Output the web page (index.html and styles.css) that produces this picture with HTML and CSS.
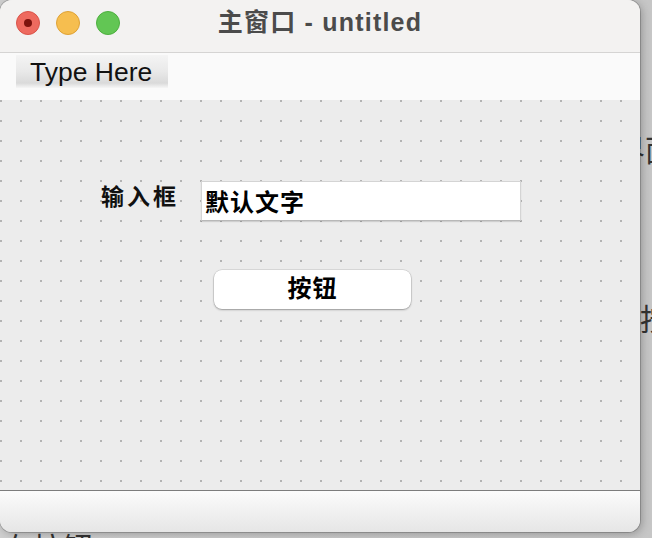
FILE: index.html
```html
<!DOCTYPE html>
<html lang="zh">
<head>
<meta charset="utf-8">
<title>主窗口 - untitled</title>
<link rel="stylesheet" href="styles.css">
</head>
<body>
<div class="desktop">
  <div class="behind behind-a">界面</div>
  <div class="behind behind-b">按钮</div>
  <div class="behind behind-c">布按钮</div>
  <div class="window">
    <div class="titlebar">
      <div class="lights">
        <span class="light red"><span class="dot"></span></span>
        <span class="light yellow"></span>
        <span class="light green"></span>
      </div>
      <div class="title">主窗口 - untitled</div>
    </div>
    <div class="menubar">
      <div class="menu-item">Type Here</div>
    </div>
    <div class="canvas">
      <div class="form-row">
        <div class="label">输入框</div>
        <div class="field">默认文字</div>
      </div>
      <div class="button-row">
        <div class="button">按钮</div>
      </div>
    </div>
    <div class="statusbar"></div>
  </div>
</div>
</body>
</html>
```
FILE: styles.css
```css
* { box-sizing: border-box; }
html, body { margin: 0; padding: 0; }
body {
  width: 652px;
  height: 538px;
  overflow: hidden;
  background: #c9c9c9;
  font-family: "Liberation Sans", "Noto Sans CJK SC", sans-serif;
}
.desktop {
  position: relative;
  width: 652px;
  height: 538px;
  overflow: hidden;
  background: linear-gradient(to right, #cfcfcf, #c6c6c6);
}
.behind {
  position: absolute;
  font-family: "Noto Sans CJK SC", sans-serif;
  font-size: 30px;
  line-height: 1;
  color: #333;
  white-space: nowrap;
}
.behind-a { left: 615px; top: 133px; }
.behind-b { left: 640px; top: 302px; }
.behind-c { left: 3px; top: 531px; }
.window {
  position: absolute;
  left: 0;
  top: 0;
  width: 640px;
  height: 532px;
  border-radius: 12px;
  overflow: hidden;
  background: #ececec;
  display: flex;
  flex-direction: column;
  box-shadow: 0 0 0 1px rgba(0,0,0,0.18), 2px 2px 8px rgba(0,0,0,0.25);
}
.titlebar {
  height: 53px;
  flex: none;
  background: #f3f2f1;
  border-bottom: 1px solid #d5d4d3;
  position: relative;
  display: flex;
  align-items: center;
  justify-content: center;
}
.lights {
  position: absolute;
  left: 16px;
  top: 11px;
  display: flex;
  gap: 16px;
}
.light {
  width: 24px;
  height: 24px;
  border-radius: 50%;
  display: flex;
  align-items: center;
  justify-content: center;
}
.red { background: #ee6a5f; border: 1px solid #d9544a; }
.red .dot { width: 8px; height: 8px; border-radius: 50%; background: #7d130d; }
.yellow { background: #f6be4f; border: 1px solid #dea236; }
.green { background: #62c654; border: 1px solid #4daf3f; }
.title {
  font-family: "Liberation Sans", "Noto Sans CJK SC", sans-serif;
  font-weight: bold;
  font-size: 25px;
  letter-spacing: 1.2px;
  line-height: 1;
  color: #4b4b4b;
  margin-top: -8px;
  margin-left: 0;
}
.menubar {
  height: 47px;
  flex: none;
  background: #fafafa;
  padding: 2px 0 0 16px;
  display: flex;
  align-items: flex-start;
}
.menu-item {
  width: 152px;
  height: 33px;
  background: linear-gradient(to bottom, #f4f4f4 0%, #e9e9e9 50%, #dadada 85%, #f6f6f6 100%);
  font-size: 26.5px;
  color: #111;
  padding-left: 14px;
  line-height: 34px;
  white-space: nowrap;
}
.canvas {
  flex: 1;
  background-color: #ececec;
  background-image: radial-gradient(circle at 1px 1px, #b3b3b3 1px, transparent 1.4px);
  background-size: 20px 20px;
  background-position: 0 0;
  padding: 81px 0 0 101px;
}
.form-row {
  display: flex;
  align-items: center;
  gap: 24px;
}
.label {
  font-family: "Noto Sans CJK SC", sans-serif;
  font-weight: bold;
  font-size: 23px;
  letter-spacing: 3px;
  line-height: 1;
  color: #111;
  width: 76px;
  white-space: nowrap;
  margin-top: -11px;
}
.field {
  width: 320px;
  height: 40px;
  background: #fff;
  border: 1px solid #d4d4d4;
  border-bottom-color: #b8b8b8;
  box-shadow: 0 1px 1px rgba(0,0,0,0.12);
  font-family: "Noto Sans CJK SC", sans-serif;
  font-weight: bold;
  font-size: 24px;
  letter-spacing: 1px;
  color: #000;
  padding-left: 3px;
  line-height: 37px;
}
.button-row {
  padding: 49px 0 0 113px;
}
.button {
  width: 197px;
  height: 39px;
  background: #fff;
  border-radius: 8px;
  box-shadow: 0 0 0 0.5px rgba(0,0,0,0.15), 0 1px 2px rgba(0,0,0,0.3);
  font-family: "Noto Sans CJK SC", sans-serif;
  font-weight: bold;
  font-size: 24px;
  letter-spacing: 1px;
  color: #000;
  text-align: center;
  line-height: 34px;
}
.statusbar {
  height: 42px;
  flex: none;
  border-top: 1px solid #7c7c7c;
  background: linear-gradient(to bottom, #fbfbfb, #e6e6e6);
}
```
